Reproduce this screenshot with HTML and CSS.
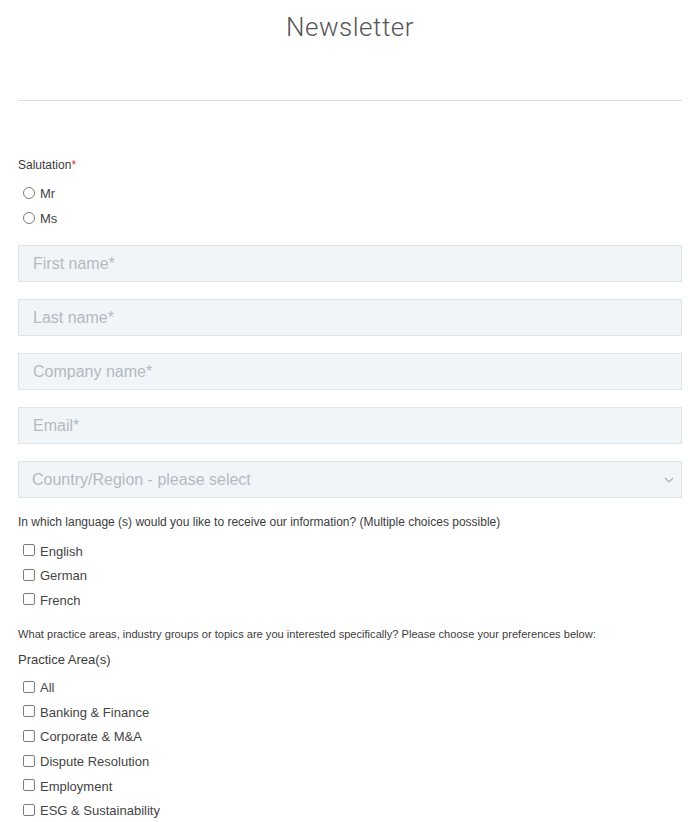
FILE: index.html
```html
<!DOCTYPE html>
<html lang="en">
<head>
<meta charset="utf-8">
<title>Newsletter</title>
<link rel="stylesheet" href="styles.css">
</head>
<body>
<div class="page">
  <h1 class="title">Newsletter</h1>
  <div class="divider"></div>

  <form class="form">
    <div class="label label-salutation">Salutation<span class="req">*</span></div>
    <div class="options options-radio">
      <label class="opt"><input type="radio" name="sal"> Mr</label>
      <label class="opt"><input type="radio" name="sal"> Ms</label>
    </div>

    <div class="fields">
      <input class="field" type="text" placeholder="First name*">
      <input class="field" type="text" placeholder="Last name*">
      <input class="field" type="text" placeholder="Company name*">
      <input class="field" type="email" placeholder="Email*">
      <div class="select-wrap">
        <select class="field select">
          <option>Country/Region - please select</option>
        </select>
        <svg class="chevron" width="10" height="6" viewBox="0 0 10 6"><path d="M1 1 L5 5 L9 1" fill="none" stroke="#a9b0b7" stroke-width="1.2"/></svg>
      </div>
    </div>

    <div class="label label-lang">In which language (s) would you like to receive our information? (Multiple choices possible)</div>
    <div class="options options-check">
      <label class="opt"><input type="checkbox"> English</label>
      <label class="opt"><input type="checkbox"> German</label>
      <label class="opt"><input type="checkbox"> French</label>
    </div>

    <div class="note">What practice areas, industry groups or topics are you interested specifically? Please choose your preferences below:</div>
    <div class="subhead">Practice Area(s)</div>
    <div class="options options-practice">
      <label class="opt"><input type="checkbox"> All</label>
      <label class="opt"><input type="checkbox"> Banking &amp; Finance</label>
      <label class="opt"><input type="checkbox"> Corporate &amp; M&amp;A</label>
      <label class="opt"><input type="checkbox"> Dispute Resolution</label>
      <label class="opt"><input type="checkbox"> Employment</label>
      <label class="opt"><input type="checkbox"> ESG &amp; Sustainability</label>
    </div>
  </form>
</div>
</body>
</html>
```

FILE: styles.css
```css
html, body {
  margin: 0;
  padding: 0;
  background: #ffffff;
}

body {
  font-family: "Liberation Sans", Arial, sans-serif;
  color: #3c3c3c;
}

.page {
  padding: 0 18px;
}

.title {
  margin: 0;
  padding-top: 12px;
  font-family: Roboto, "DejaVu Sans", sans-serif;
  font-weight: 300;
  font-size: 26px;
  line-height: 30px;
  letter-spacing: 0.5px;
  color: #555555;
  text-align: center;
}

.divider {
  margin-top: 58px;
  height: 1px;
  background: #dddddd;
}

.form {
  display: flex;
  flex-direction: column;
}

.label {
  font-size: 12px;
  line-height: 16px;
}

.label-salutation {
  margin-top: 56px;
}

.req {
  color: #d9342b;
}

.options {
  display: flex;
  flex-direction: column;
}

.opt {
  display: flex;
  align-items: center;
  font-size: 13px;
  color: #444444;
}

.opt input {
  -webkit-appearance: none;
  appearance: none;
  box-sizing: border-box;
  margin: -2px 5px 0 5px;
  width: 12px;
  height: 12px;
  border: 1px solid #7c7c7c;
  border-radius: 2px;
  background: #ffffff;
}

.opt input[type="radio"] {
  border-radius: 50%;
}

.options-radio {
  margin-top: 8px;
}

.options-radio .opt {
  height: 25px;
}

.fields {
  margin-top: 14px;
  display: flex;
  flex-direction: column;
  gap: 17px;
}

.field {
  box-sizing: border-box;
  display: block;
  width: 100%;
  height: 37px;
  margin: 0;
  padding: 0 14px;
  border: 1px solid #dde4ea;
  border-radius: 0;
  background: #f2f5f8;
  font-family: "Liberation Sans", Arial, sans-serif;
  font-size: 16px;
  color: #b3bac1;
  outline: none;
}

.field::placeholder {
  color: #b3bac1;
}

.select-wrap {
  position: relative;
}

.select {
  -webkit-appearance: none;
  appearance: none;
  padding-left: 13px;
}

.chevron {
  position: absolute;
  right: 8px;
  top: 16px;
  pointer-events: none;
}

.label-lang {
  margin-top: 16px;
}

.options-check {
  margin-top: 9px;
}

.options-check .opt {
  height: 24.5px;
}

.note {
  margin-top: 14px;
  font-size: 11.1px;
  line-height: 14px;
}

.subhead {
  margin-top: 11px;
  font-size: 13px;
  line-height: 16px;
}

.options-practice {
  margin-top: 8px;
}

.options-practice .opt {
  height: 24.6px;
}
```
